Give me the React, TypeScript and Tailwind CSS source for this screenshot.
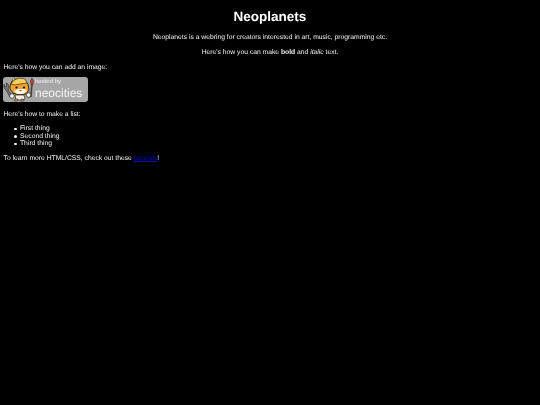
const items = ["First thing", "Second thing", "Third thing"];

export default function App() {
  return (
    <div className="h-[405px] overflow-hidden bg-black">
      <div className="px-[3.5px] pt-[1px] font-['Liberation_Sans',Arial,sans-serif] text-[6.75px] leading-[8px] text-[#f2f2f2] blur-[0.2px] [text-rendering:geometricPrecision]">
        <h1 className="pt-[8px] text-center text-[13.5px] leading-[15px] font-bold text-white">Neoplanets</h1>
        <p className="mt-[10px] text-center">Neoplanets is a webring for creators interested in art, music, programming etc.</p>
        <p className="mt-[7px] text-center">
          Here's how you can make <b>bold</b> and <i>italic</i> text.
        </p>
        <p className="mt-[7px]">Here's how you can add an image:</p>
        <div className="mt-[5px] -ml-[0.5px] flex h-[25px] w-[85px] items-center rounded-[3px] bg-[#a6a6a6]">
          <svg viewBox="0 0 32 25" className="h-[25px] w-[32px] shrink-0">
            {/* wrench */}
            <path d="M1 7l1 3 2-1-1-3 2 1 1 3-1 2 4 7-2 1-4-7-2-2z" fill="#777" stroke="#222" strokeWidth=".6" />
            {/* head */}
            <path d="M7 9l2-5 6-2 6 1 4 4 1 6-3 4-7 1-6-2-3-4z" fill="#ee9f35" stroke="#2a1a08" strokeWidth=".9" />
            {/* helmet */}
            <path d="M8 7l3-4 5-2 6 1 2 4-7 1-5 1z" fill="#f4cf5c" stroke="#2a1a08" strokeWidth=".6" />
            <path d="M9 3l3-2-1 3z" fill="#fff3c0" stroke="#2a1a08" strokeWidth=".4" />
            {/* face */}
            <path d="M11 14l4-2 7 0 2 2-4 3-6 0z" fill="#fff4dd" />
            <circle cx="13.5" cy="10.5" r="1.1" fill="#111" />
            <circle cx="21" cy="10.5" r="1.1" fill="#111" />
            <path d="M16 13l3 0-1.5 1.5z" fill="#b8322c" />
            {/* body and feet */}
            <path d="M12 18l9 0 1 4-3 1-6 0z" fill="#f4f0e6" stroke="#222" strokeWidth=".7" />
            <path d="M12 22l-1 2 3 0 1-2zM18 22l0 2 3 0-1-2z" fill="#e89a35" stroke="#222" strokeWidth=".5" />
            <circle cx="9" cy="19" r="2.3" fill="#f8f5ea" stroke="#222" strokeWidth=".7" />
            {/* brush */}
            <path d="M28.5 7l1 0-1.2 13-1 0z" fill="#6b3b24" stroke="#222" strokeWidth=".4" />
            <path d="M29 1l1.5 3-.5 3.5h-2l-.5-3.5z" fill="#c9413a" stroke="#222" strokeWidth=".5" />
            <circle cx="25.5" cy="18" r="2.3" fill="#f8f5ea" stroke="#222" strokeWidth=".7" />
          </svg>
          <div className="text-[#f4f4f4]">
            <div className="text-[6px] leading-[7px]">hosted by</div>
            <div className="text-[12px] leading-[14px]">neocities</div>
          </div>
        </div>
        <p className="mt-[9px]">Here's how to make a list:</p>
        <ul className="mt-[6px] pl-[10.5px] leading-[7.6px]">
          {items.map((item) => (
            <li key={item} className="flex items-center gap-[3.5px]">
              <span className="h-[2.5px] w-[2.5px] rounded-full bg-[#f2f2f2]" />
              {item}
            </li>
          ))}
        </ul>
        <p className="mt-[7px]">
          To learn more HTML/CSS, check out these{" "}
          <a className="text-[#0000cc] underline">tutorials</a>!
        </p>
      </div>
    </div>
  );
}
